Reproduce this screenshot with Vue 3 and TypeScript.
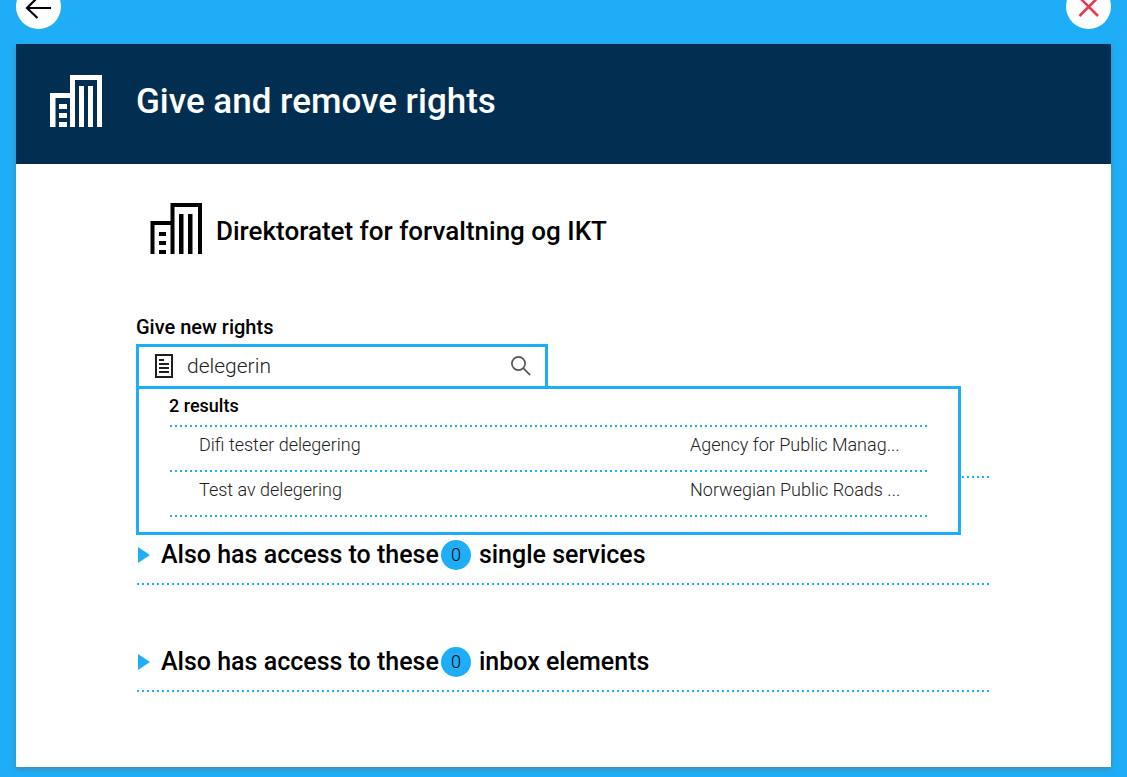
<script setup lang="ts">
import { computed, ref } from 'vue'

interface Service {
  name: string
  owner: string
}

interface AccessGroup {
  count: number
  label: string
}

const query = ref('delegerin')

const services: Service[] = [
  { name: 'Difi tester delegering', owner: 'Agency for Public Manag...' },
  { name: 'Test av delegering', owner: 'Norwegian Public Roads ...' },
]

const results = computed(() =>
  services.filter((s) => s.name.toLowerCase().includes(query.value.trim().toLowerCase())),
)

const groups: AccessGroup[] = [
  { count: 0, label: 'single services' },
  { count: 0, label: 'inbox elements' },
]
</script>

<template>
  <div class="page">
    <nav class="topbar">
      <button class="round" type="button" aria-label="Back">
        <svg width="45" height="45" viewBox="0 0 45 45" fill="none" stroke="#000" stroke-width="2.2">
          <path d="M35 24H11M21.5 13.5L11 24L21.5 34" />
        </svg>
      </button>
      <button class="round" type="button" aria-label="Close">
        <svg width="45" height="45" viewBox="0 0 45 45" fill="none" stroke="#e23b53" stroke-width="2.6">
          <path d="M13.5 13.5L32 32M32 13.5L13.5 32" />
        </svg>
      </button>
    </nav>

    <main class="modal">
      <header class="modal-header">
        <svg class="building" width="52" height="52" viewBox="0 0 52 52" fill="currentColor">
          <path d="M0 18H20V0H52V52H47V5H25V52H20V23H5.500V52H0Z" />
          <path d="M29 11H34V52H29ZM38 11H43V52H38ZM9 29H17V34H9ZM9 38H17V43H9ZM9 47H17V52H9Z" />
        </svg>
        <h1>Give and remove rights</h1>
      </header>

      <div class="modal-body">
        <div class="party">
          <svg class="building" width="52" height="52" viewBox="0 0 52 52" fill="currentColor">
            <path d="M0.500 19H20.500V1H52V52H48V5H24.500V52H20.500V23H4.500V52H0.500Z" />
            <path d="M29 12H33.500V52H29ZM38 12H42.500V52H38ZM9 30H16V34H9ZM9 39H16V43H9ZM9 48H16V52H9Z" />
          </svg>
          <h2>Direktoratet for forvaltning og IKT</h2>
        </div>

        <div class="search">
          <label for="rights-search">Give new rights</label>
          <div class="search-box">
            <svg width="18" height="24" viewBox="0 0 18 24" fill="none" stroke="#1e1e1e" stroke-width="2">
              <path d="M1 1H17V23H1Z" />
              <path d="M4 6H9M4 10H14M4 14H14M4 18H14" />
            </svg>
            <input id="rights-search" v-model="query" type="text" autocomplete="off" />
            <button type="button" class="search-button" aria-label="Search">
              <svg width="20" height="20" viewBox="0 0 20 20" fill="none" stroke="#555" stroke-width="1.700">
                <circle cx="7.500" cy="7.500" r="6.600" />
                <path d="M12.200 12.200L19.200 19.200" />
              </svg>
            </button>
          </div>
          <section class="results">
            <h3>{{ results.length }} results</h3>
            <ul>
              <li v-for="s in results" :key="s.name">
                <a href="#">
                  <span class="name">{{ s.name }}</span>
                  <span class="owner">{{ s.owner }}</span>
                </a>
              </li>
            </ul>
          </section>
        </div>

        <div class="divider"></div>

        <button v-for="g in groups" :key="g.label" type="button" class="group" aria-expanded="false">
          <svg width="12" height="16" viewBox="0 0 12 16" fill="#1eaef7"><path d="M0 0L12 8L0 16Z" /></svg>
          <span class="group-lead">Also has access to these</span>
          <span class="badge">{{ g.count }}</span>
          <span>{{ g.label }}</span>
        </button>
      </div>
    </main>
  </div>
</template>

<style>
body {
  background: #1eaef7;
}
</style>

<style scoped>
.page {
  --blue: #1eaef7;
  --dots: repeating-linear-gradient(90deg, transparent 0 1px, #1eaef7 1px 3px, transparent 3px 5px);
  box-sizing: border-box;
  min-height: 100vh;
  padding: 0 16px 10px;
  overflow: hidden;
  display: flex;
  flex-direction: column;
  background: var(--blue);
  color: #000;
  font-family: Roboto, "Liberation Sans", sans-serif;
}
.page * {
  box-sizing: border-box;
}
h1,
h2,
h3,
ul {
  margin: 0;
  padding: 0;
  font-weight: 500;
}
button {
  padding: 0;
  border: 0;
  background: none;
  color: inherit;
  font: inherit;
}
svg {
  display: block;
  flex: none;
}
.topbar {
  display: flex;
  justify-content: space-between;
  margin: -16px 0 15px;
}
.round {
  width: 45px;
  height: 45px;
  border-radius: 50%;
  background: #fff;
}
.modal {
  flex: 1;
  background: #fff;
  box-shadow: 0 2px 5px rgba(100, 100, 100, 0.5);
}
.modal-header {
  display: flex;
  align-items: center;
  gap: 34px;
  height: 120px;
  padding: 0 34px;
  background: #022f51;
  color: #fff;
}
.modal-header .building {
  margin-top: -6px;
}
h1 {
  margin-top: -4px;
  font-size: 35px;
  line-height: 40px;
}
.modal-body {
  padding: 38px 120px 72px;
}
.party {
  display: flex;
  align-items: center;
  gap: 14px;
  padding-left: 14px;
}
h2 {
  margin-top: 6px;
  font-size: 26px;
  line-height: 32px;
}
.search {
  position: relative;
  margin-top: 62px;
}
label {
  display: block;
  height: 28px;
  font-size: 20px;
  font-weight: 500;
  line-height: 22px;
}
.search-box {
  display: flex;
  align-items: center;
  gap: 14px;
  max-width: 412px;
  height: 45px;
  padding: 0 14px 2px 16px;
  border: 3px solid var(--blue);
}
input {
  flex: 1;
  min-width: 0;
  padding: 0;
  border: 0;
  outline: 0;
  background: none;
  color: #222;
  font: 300 21px/28px Roboto, "Liberation Sans", sans-serif;
}
.results {
  position: absolute;
  z-index: 1;
  top: 70px;
  left: 0;
  right: 30px;
  padding: 5px 30px 15px;
  border: 3px solid var(--blue);
  background: #fff;
}
h3 {
  height: 33px;
  background: var(--dots) bottom / 100% 2px no-repeat;
  font-size: 18px;
  line-height: 24px;
}
ul {
  list-style: none;
}
li {
  background: var(--dots) bottom / 100% 2px no-repeat;
}
li a {
  display: flex;
  justify-content: space-between;
  height: 45px;
  padding: 0 0 0 30px;
  color: #222;
  font-size: 18px;
  font-weight: 300;
  line-height: 36px;
  text-decoration: none;
}
.owner {
  width: 238px;
  white-space: nowrap;
}
.divider {
  height: 2px;
  margin-top: 87px;
  background: var(--dots);
}
.group {
  display: flex;
  align-items: center;
  width: 100%;
  height: 107px;
  padding: 46px 0 0 2px;
  background: var(--dots) bottom / 100% 2px no-repeat;
  font-size: 25px;
  font-weight: 500;
  line-height: 32px;
}
.group-lead {
  margin-left: 11px;
}
.badge {
  width: 30px;
  height: 30px;
  margin: 0 8px 0 2px;
  border-radius: 50%;
  background: var(--blue);
  font-size: 18px;
  font-weight: 300;
  line-height: 30px;
  text-align: center;
}
</style>
